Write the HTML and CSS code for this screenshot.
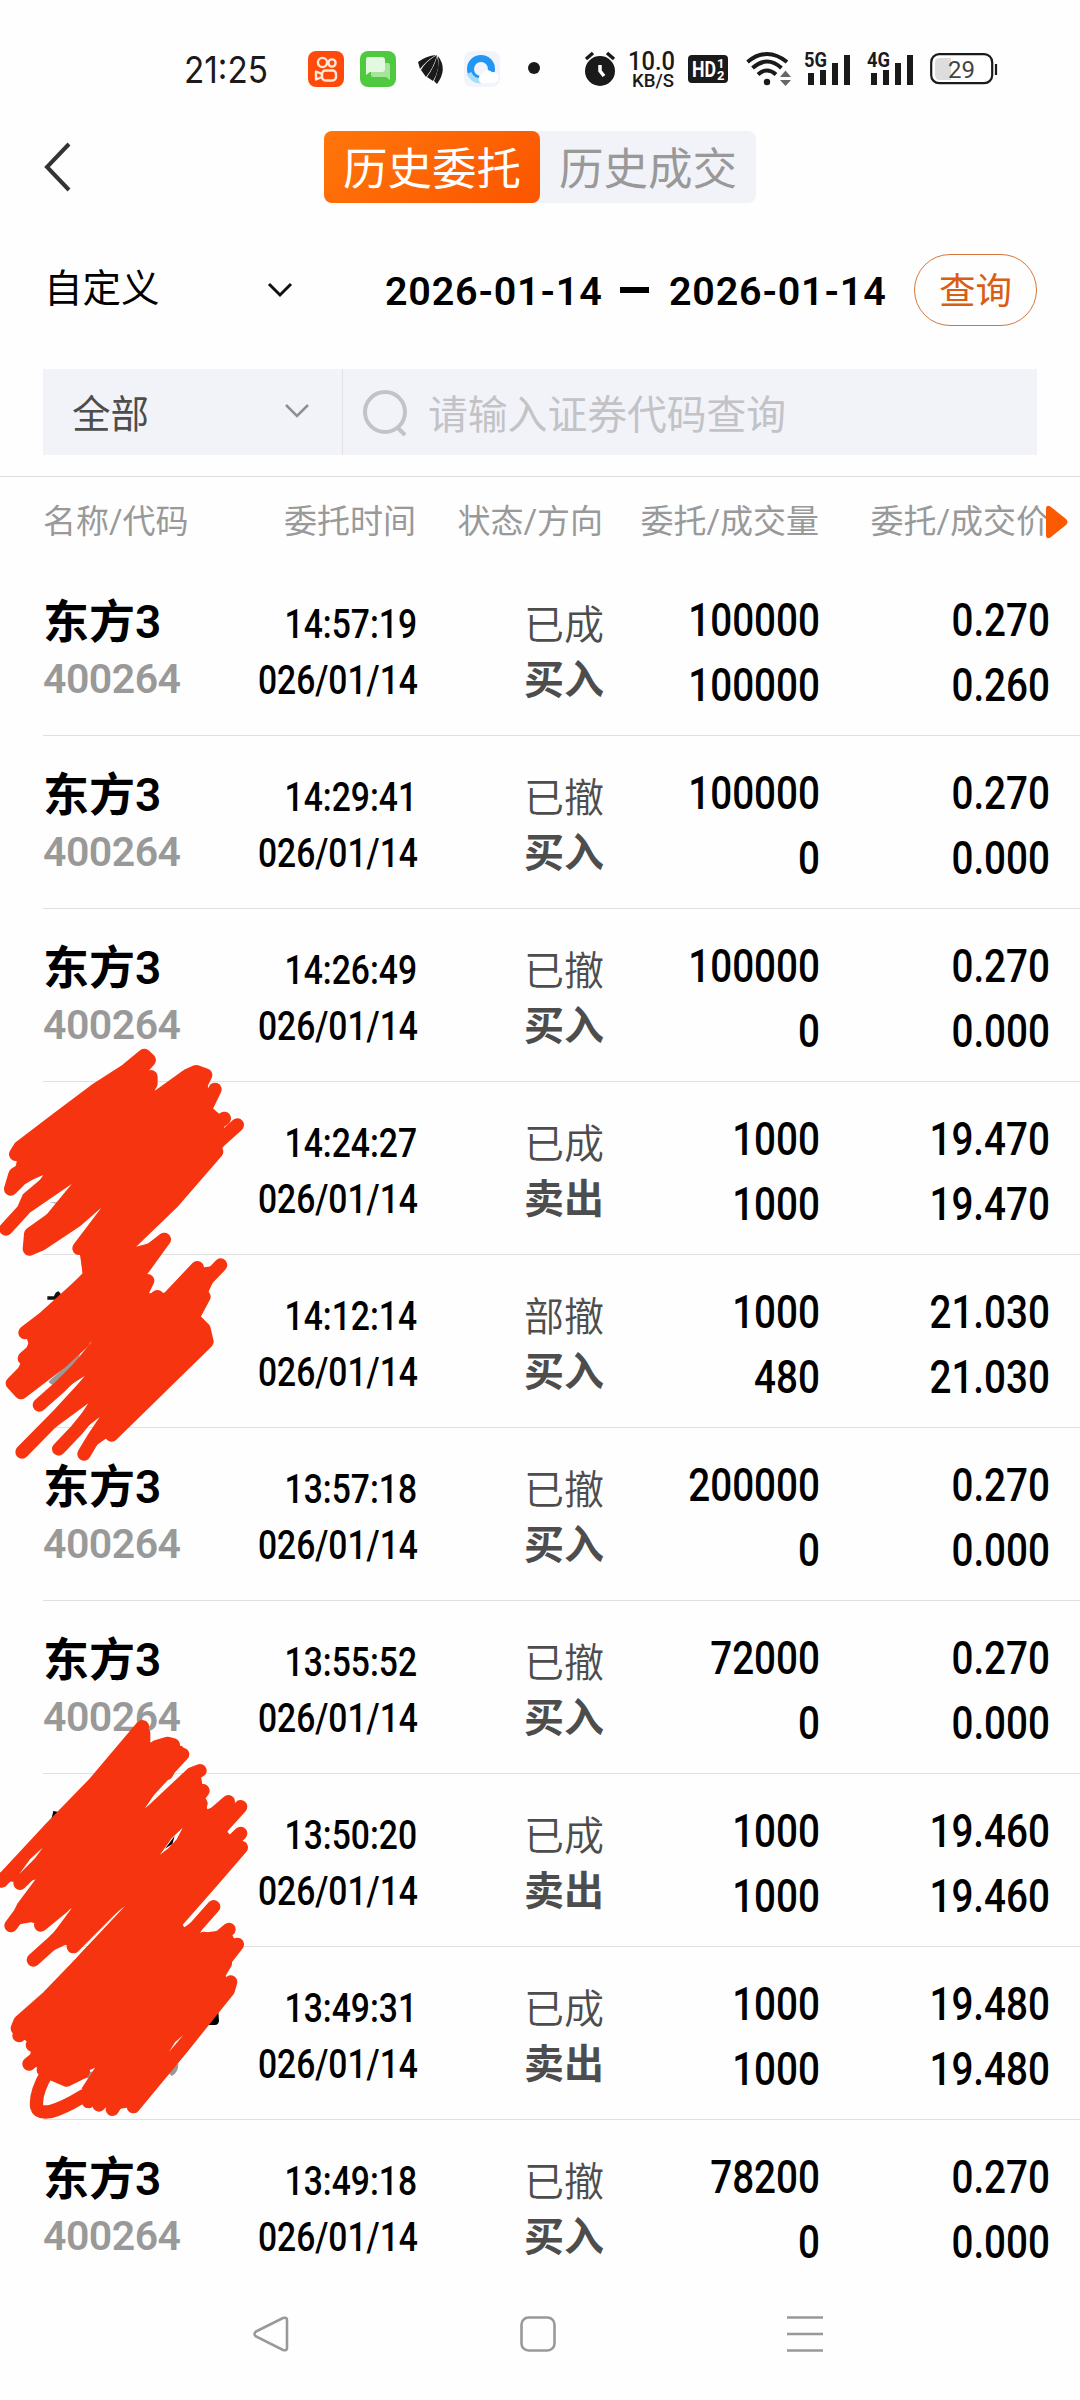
FILE: index.html
```html
<!DOCTYPE html>
<html lang="zh-CN">
<head>
    <meta charset="UTF-8">
    <meta name="viewport" content="width=device-width, initial-scale=1.0">
    <title>历史委托</title>
    <link rel="stylesheet" href="styles.css">
</head>
<body>

<div class="statusbar">
    <svg class="clock" width="86" height="44" viewBox="0 0 86 44"><text x="0" y="36" textLength="84" lengthAdjust="spacingAndGlyphs" font-family="Inter" font-size="37">21:25</text></svg>
    <svg class="app" width="36" height="36" viewBox="0 0 36 36">
        <rect width="36" height="36" rx="8" fill="#ff4a0c"/>
        <g fill="none" stroke="#ffe9d8" stroke-width="2.4"><circle cx="14.5" cy="11.5" r="4.6"/><circle cx="24" cy="12" r="3.6"/><rect x="14" y="19.500" width="14" height="10" rx="3.500"/><path d="M14 23l-6-2.500v8l6-2.500" stroke-linejoin="round"/></g>
    </svg>
    <svg class="app" width="36" height="36" viewBox="0 0 36 36">
        <rect width="36" height="36" rx="8" fill="#4fc940"/>
        <path d="M13 12h15q2 0 2 2v15l-4-3H13q-2 0-2-2V14q0-2 2-2z" fill="#a5e49b"/>
        <path d="M8 6h14q3 0 3 3v9q0 3-3 3H10l-4 3V8q0-2 2-2z" fill="#e4f8e0"/>
    </svg>
    <svg class="app leaf" width="28" height="30" viewBox="0 0 28 30" fill="#1a1a1a">
        <path d="M1 8Q9 2 19 1Q10 6 3 15z"/><path d="M4 16Q9 7 20 1Q17 13 9 23z"/><path d="M10 23Q18 12 20 2Q24 14 16 27z"/><path d="M17 27Q23 14 21 2Q31 15 20 30z"/>
    </svg>
    <svg class="app" width="36" height="36" viewBox="0 0 36 36">
        <rect width="36" height="36" rx="8" fill="#f1f5fb"/>
        <circle cx="17" cy="18" r="10.500" fill="none" stroke="#2196f3" stroke-width="7"/>
        <path d="M5 22a13 13 0 0 0 12 8" fill="none" stroke="#a6dcf8" stroke-width="5"/>
        <path d="M17 32a5 5 0 0 1 1-9a6 6 0 0 1 10-2a5.500 5.500 0 0 1 2 11z" fill="#fff"/>
    </svg>
    <svg class="dot" width="12" height="12"><circle cx="6" cy="6" r="6"/></svg>
    <svg width="32" height="36" viewBox="0 0 32 36">
        <circle cx="16" cy="20" r="15" fill="#1a1a1a"/><path d="M2 8l7-6M30 8l-7-6" stroke="#1a1a1a" stroke-width="3.500"/><path d="M16 14v6l4 5" fill="none" stroke="#fff" stroke-width="3.500"/>
    </svg>
    <svg class="speed" width="48" height="44" viewBox="0 0 48 44" font-weight="500">
        <text x="0" y="20" font-size="25" textLength="47" lengthAdjust="spacingAndGlyphs">10.0</text><text x="4" y="37" font-size="18" textLength="42" lengthAdjust="spacingAndGlyphs">KB/S</text>
    </svg>
    <svg class="hd" width="40" height="28" viewBox="0 0 40 28">
        <rect width="40" height="28" rx="4" fill="#1a1a1a"/><g fill="#fff" font-weight="700"><text x="4" y="22" font-size="22" textLength="24" lengthAdjust="spacingAndGlyphs">HD</text><text x="29" y="13" font-size="13">1</text><text x="29" y="25" font-size="13">2</text></g>
    </svg>
    <svg class="wifi" width="46" height="36" viewBox="0 0 46 36">
        <g fill="none" stroke="#1a1a1a" stroke-width="4"><path d="M1.500 11Q21-5 41 11"/><path d="M6.500 17Q21 4 35.500 17"/><path d="M12 23.500Q21 15.500 30 23.500"/></g><circle cx="21" cy="31" r="3.200"/>
        <path d="M34 26h11l-5.500-6.500zM34 29h11l-5.500 6z" fill="#666"/>
    </svg>
    <svg class="signal" width="48" height="36" viewBox="0 0 48 36"><text x="0" y="16" font-size="21" font-weight="700" textLength="23" lengthAdjust="spacingAndGlyphs">5G</text><path d="M4 22h6v12H4zM16 19h6v15h-6zM28 12h6v22h-6zM40 4h6v30h-6z"/></svg>
    <svg class="signal" width="48" height="36" viewBox="0 0 48 36"><text x="0" y="16" font-size="21" font-weight="700" textLength="23" lengthAdjust="spacingAndGlyphs">4G</text><path d="M4 22h6v12H4zM16 19h6v15h-6zM28 12h6v22h-6zM40 4h6v30h-6z"/></svg>
    <svg class="battery" width="68" height="32" viewBox="0 0 68 32">
        <rect x="1.200" y="1.200" width="61" height="29" rx="8" fill="#fff" stroke="#1a1a1a" stroke-width="2.200"/><path d="M10 5h11v22H10q-5 0-5-5V10q0-5 5-5z" fill="#ddd"/><path d="M66 11v11" stroke="#1a1a1a" stroke-width="2.200"/><text x="18" y="24.500" font-size="24" textLength="27" fill="#444">29</text>
    </svg>
</div>

<div class="topbar">
    <svg class="back" width="30" height="52" viewBox="0 0 30 52"><path d="M26 3L4 26l22 23" fill="none" stroke="#333" stroke-width="4"/></svg>
    <div class="tabs"><div class="tab active">历史委托</div><div class="tab">历史成交</div></div>
</div>

<div class="filter">
    <div class="range">自定义</div>
    <svg class="arrow" width="26" height="16" viewBox="0 0 26 16"><path d="M2 2l11 11L24 2" fill="none" stroke="#111" stroke-width="3"/></svg>
    <div class="date">2026-01-14</div>
    <div class="dash"></div>
    <div class="date">2026-01-14</div>
    <div class="query">查询</div>
</div>

<div class="search">
    <div class="type">全部<svg width="26" height="16" viewBox="0 0 26 16"><path d="M2 2l11 11L24 2" fill="none" stroke="#8e8e93" stroke-width="2.500"/></svg></div>
    <svg class="glass" width="46" height="48" viewBox="0 0 46 48"><g fill="none" stroke="#c3c3c7" stroke-width="4"><circle cx="23" cy="23" r="20"/><path d="M36 39l7 7"/></g></svg>
    <div class="placeholder">请输入证券代码查询</div>
</div>

<div class="thead">
    <div>名称/代码</div><div>委托时间</div><div>状态/方向</div><div>委托/成交量</div><div>委托/成交价</div>
    <svg class="more" width="22" height="34" viewBox="0 0 22 34"><path d="M0 3Q1-1 5 2L20 14Q23 17 20 20L5 32Q1 35 0 31z" fill="#fb5a00"/></svg>
</div>
<div id="list"></div>

<div class="navbar">
    <svg width="36" height="36" viewBox="0 0 36 36"><path d="M3 15.500L30 2Q34 1 34 4v28q0 3-4 2L3 20.500Q0 18 3 15.500z"/></svg>
    <svg width="36" height="36" viewBox="0 0 36 36"><rect x="1.500" y="1.500" width="33" height="33" rx="7"/></svg>
    <svg width="36" height="36" viewBox="0 0 36 36"><path d="M0 1.500h36M0 18h36M0 34.500h36"/></svg>
</div>

<!-- 涂抹遮挡 -->
<svg class="mask mask-1" viewBox="0 0 810 1350">
    <path d="M142 799h20q4-14 14-15l20 25h-54z" fill="#111"/>
    <path d="M140 510q30 20 50-12l28-35-5 35q-30 40-73 12zM145 1055l95-85-5 25-50 70q-20 10-40-10z" fill="#999"/>
    <path class="ink" d="M433 76L445 120 453 140 465 182 585 125 617 135 635 232 673 265 670 350 408 650 493 628 442 730 443 752 447 790 495 788 592 713 613 712 662 705 627 782 598 860 612 897 621 935 335 1215 312 1230 252 1272 300 1160 176 1257 265 1120 66 1266 255 1037 118 1125 275 935 63 1088 37 1060 85 940 75 908 248 730 237 655 315 527 88 657 92 612 215 462 18 597 130 435 32 477 50 396 47 373z"/>
    <path class="pen" d="M433 76L380 120 290 178 170 268 60 352 47 373M433 76L448 90 430 110M453 140v20L430 200M32 477L45 433 100 400M32 477L62 447 115 415M18 597L70 540 85 505 150 450 240 410M92 612L165 560 240 500M92 612L88 657 122 643 228 573 300 510M237 655L320 545 400 440M264 690l4 40M470 203L565 135 588 125 617 135 600 170M645 178L620 230 560 260M630 255L600 300M673 265L600 320M712 285L640 350M650 365L520 515 390 640M493 628L400 700M493 628L430 715M443 752L420 800M472 800L440 830M592 713L500 810M662 705L590 780M612 800L580 860M585 870L612 897 621 935 335 1215M75 908L130 866 250 757 290 720M73 985L130 935M37 1060L110 985M37 1060L63 1088 185 995 250 935M118 1125L180 1070 290 960M66 1266L180 1150 300 1020M176 1257L230 1200 320 1090M252 1272L280 1225 330 1150"/>
</svg>
<svg class="mask mask-2" viewBox="0 0 810 1350">
    <path d="M160 333l20 4-8 25-18-4zM655 935l2 28q-2 12-12 12h-25z" fill="#000"/>
    <path d="M535 1090q0 30-20 38l-15-15zM250 1115h40l-20 20h-22z" fill="#999"/>
    <path class="ink" d="M427 80L443 110 447 142 503 130 545 160 435 325 600 212 610 270 622 328 685 305 722 320 682 395 724 442 545 670 553 682 641 620 600 700 687 688 712 733 675 825 693 848 400 1220 337 1230 297 1215 265 1205 245 1165 285 1103 200 1140 150 1120 87 1092 95 1035 57 1007 52 985 240 762 375 618 220 740 195 735 100 780 215 625 122 675 93 667 33 677 110 538 60 550 40 545 10 543z"/>
    <path class="pen" d="M5 543L-8 535M5 543L145 392 285 248 427 80M431 100v40L400 180M400 185L470 140 503 130 520 135M548 163L430 290M535 155L500 220M600 212L575 222 455 335M609 272L560 340M603 310L560 370M685 305L610 370M722 320L650 400M722 400L670 450M724 442L640 540 530 665M641 620L570 700 540 730M612 715L580 740M687 688L600 760M712 733L660 800M676 790L640 850M692 846L685 870 545 1045 400 1220M337 1228L400 1130M297 1215L340 1150M265 1205L320 1120M97 1035L140 1000M87 1092L150 1040M57 1007L110 960M52 985L60 965 145 890 255 776 340 690M220 740L300 660 350 610M100 780L150 735 260 630M122 675L190 620M33 677L60 640 70 620 130 540M60 550L130 480M140 1120Q105 1180 110 1220Q115 1240 150 1235Q190 1225 250 1188M130 1110L200 1140 250 1115"/>
    <path d="M58 522L90 478 128 443 105 475zM480 464L515 415 548 383 530 418 505 445zM507 1056L525 1027 550 1005z" fill="#fff"/>
    <path d="M495 446L524 408 517 432z" fill="#000"/>
</svg>

<script>
    const orders = [
        ['东方3', '400264', '14:57:19', '已成', '买入', '100000', '100000', '0.270', '0.260'],
        ['东方3', '400264', '14:29:41', '已撤', '买入', '100000', '0', '0.270', '0.000'],
        ['东方3', '400264', '14:26:49', '已撤', '买入', '100000', '0', '0.270', '0.000'],
        ['', '', '14:24:27', '已成', '卖出', '1000', '1000', '19.470', '19.470'],
        ['', '', '14:12:14', '部撤', '买入', '1000', '480', '21.030', '21.030'],
        ['东方3', '400264', '13:57:18', '已撤', '买入', '200000', '0', '0.270', '0.000'],
        ['东方3', '400264', '13:55:52', '已撤', '买入', '72000', '0', '0.270', '0.000'],
        ['', '', '13:50:20', '已成', '卖出', '1000', '1000', '19.460', '19.460'],
        ['', '', '13:49:31', '已成', '卖出', '1000', '1000', '19.480', '19.480'],
        ['东方3', '400264', '13:49:18', '已撤', '买入', '78200', '0', '0.270', '0.000']
    ];

    document.getElementById('list').innerHTML = orders.map(o => `
        <div class="row">
            <div class="stock"><div class="name">${o[0]}</div><div class="code">${o[1]}</div></div>
            <div class="time"><div>${o[2]}</div><div>026/01/14</div></div>
            <div class="state"><div>${o[3]}</div><div class="side">${o[4]}</div></div>
            <div class="num"><div>${o[5]}</div><div>${o[6]}</div></div>
            <div class="num"><div>${o[7]}</div><div>${o[8]}</div></div>
        </div>`).join('');
</script>

</body>
</html>
```

FILE: styles.css
```css
* { box-sizing: border-box; }
body { position: relative; width: 1080px; height: 2400px; margin: 0; overflow: hidden; background: #fefefe; color: #000; font-family: Roboto, "Noto Sans CJK SC", sans-serif; }
svg { display: block; flex: none; overflow: visible; }

.statusbar { display: flex; align-items: flex-start; height: 110px; padding: 26px 0 0 184px; fill: #1a1a1a; }
.statusbar svg { margin-top: 25px; }
.statusbar .clock { margin-top: 21px; margin-right: 38px; }
.statusbar .app { margin-right: 16px; }
.statusbar .leaf { margin: 28px 19px 0 5px; }
.statusbar .dot { margin: 36px 44px 0 12px; }
.statusbar .speed { margin: 24px 12px 0 12px; }
.statusbar .hd { margin-top: 29px; margin-right: 18px; }
.statusbar .wifi { margin-right: 12px; }
.statusbar .signal { margin-right: 15px; }
.statusbar .battery { margin-top: 27px; }

.topbar { display: flex; height: 108px; padding: 21px 0 0 43px; }
.back { margin-top: 10px; }
.tabs { display: flex; height: 72px; margin-left: 251px; border-radius: 8px; background: #f2f3f8; }
.tab { width: 216px; line-height: 78px; text-align: center; font-size: 44.5px; color: #999; border-radius: 8px; }
.tab.active { background: linear-gradient(135deg, #ff760a, #fb5500); color: #fff; }

.filter { display: flex; align-items: center; height: 151px; padding: 0 43px 7px 44px; }
.range { width: 223px; font-size: 38.5px; line-height: 52px; margin-bottom: 3px; }
.arrow { margin-right: 92px; }
.date { width: 217px; margin-top: 3px; font-size: 39.5px; font-weight: 600; letter-spacing: .8px; white-space: nowrap; }
.dash { width: 29px; height: 6px; margin: 0 20px 0 18px; background: #000; }
.query { width: 123px; height: 72px; margin-left: auto; border: 1.5px solid #d4763c; border-radius: 36px; line-height: 73px; text-align: center; font-size: 36.5px; color: #d95d14; }

.search { display: flex; align-items: center; height: 86px; margin: 0 43px; background: #f2f3f8; }
.type { display: flex; align-items: center; justify-content: space-between; width: 300px; height: 86px; padding: 0 32px 2px 29px; border-right: 1px solid #e2e2e6; font-size: 38.5px; color: #4d4d4d; }
.glass { margin: 2px 0 0 19px; }
.placeholder { margin: 0 0 2px 20px; font-size: 39.8px; color: #c3c3c7; }

.thead, .row { display: grid; grid-template-columns: 180px 194px 187px 216px 230px; text-align: right; }
.thead { position: relative; height: 87px; margin-top: 21px; padding: 0 0 0 43px; border-top: 1px solid #ddd; font-size: 33px; line-height: 90px; color: #999; white-space: nowrap; }
.thead div { margin: 0 1px 0 -1px; }
.thead div:first-child { margin: 0; }
.thead div:first-child, .stock { text-align: left; }
.more { position: absolute; left: 1046px; top: 28px; }

.row { height: 173px; margin-left: 43px; border-bottom: 1px solid #e0e0e0; white-space: nowrap; }
.row:last-child { border-bottom: 0; }
.name { height: 88px; padding-top: 30px; font-size: 46px; line-height: 58px; font-weight: 600; }
.code { font-size: 41px; line-height: 56px; font-weight: 600; letter-spacing: -.5px; color: #999; }
.time { padding-top: 33px; font-size: 41px; line-height: 56px; font-weight: 500; transform: scaleX(.82); transform-origin: right; }
.state { padding-top: 35px; font-size: 40px; line-height: 55px; color: #4d4d4d; font-weight: 350; }
.side { font-weight: 600; }
.num { padding-top: 25px; font-size: 46px; line-height: 65px; font-weight: 500; transform: scaleX(.84); transform-origin: right; }

.navbar { display: flex; justify-content: space-between; padding: 23px 257px 0 253px; fill: none; stroke: #999; stroke-width: 2.6; }

.mask { position: absolute; left: 0; width: 270px; height: 450px; overflow: hidden; }
.mask-1 { top: 1030px; }
.mask-2 { top: 1700px; }
.ink { fill: #f63510; }
.pen { fill: none; stroke: #f63510; stroke-width: 40; stroke-linecap: round; stroke-linejoin: round; }
```
